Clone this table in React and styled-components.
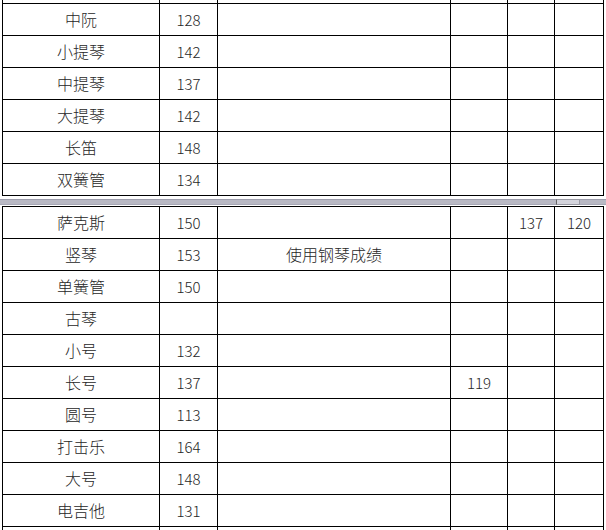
import styled, { createGlobalStyle } from 'styled-components';

const GlobalStyle = createGlobalStyle`
  html, body {
    margin: 0;
    padding: 0;
    background: #fff;
  }
  body {
    font-family: "Noto Sans CJK SC", "Noto Sans", sans-serif;
    color: #222;
  }
`;

const Page = styled.div`
  width: 606px;
  height: 530px;
  overflow: hidden;
  background: #fff;
`;

const Section = styled.div`
  display: flex;
  flex-direction: column;
  padding-left: 2px;
`;

const TopRule = styled.div`
  width: 602px;
  border-top: 1px solid #000;
`;

const Row = styled.div`
  display: grid;
  grid-template-columns: 158px 58px 233px 57px 47px 49px;
  height: ${(p) => (p.$cut ? '4px' : '32px')};
`;

const Cell = styled.div`
  box-sizing: border-box;
  display: flex;
  align-items: center;
  justify-content: center;
  border-right: 1px solid #000;
  border-bottom: 1px solid #000;
  font-size: ${(p) => (p.$num ? '15px' : '16px')};
  font-weight: 300;
  line-height: 1;
  color: #262626;
  padding-bottom: 1px;
  white-space: nowrap;
  overflow: hidden;

  &:first-child {
    border-left: 1px solid #000;
  }
`;

const PageBreak = styled.div`
  position: relative;
  height: 10px;
  padding: 3px 0 1px;
  box-sizing: border-box;
`;

const BreakBand = styled.div`
  height: 6px;
  background: #b9b9c4;
  border-top: 1px solid #9c9cab;
  border-bottom: 1px solid #a8a8b6;
  box-sizing: border-box;
`;

const BreakMarker = styled.div`
  position: absolute;
  left: 556px;
  top: 3px;
  width: 24px;
  height: 6px;
  box-sizing: border-box;
  border: 1px solid #9a9aa4;
  border-left: 1px solid #666;
  background: #d4d4dc;
`;

const topRows = [
  { name: '中阮', score: '128' },
  { name: '小提琴', score: '142' },
  { name: '中提琴', score: '137' },
  { name: '大提琴', score: '142' },
  { name: '长笛', score: '148' },
  { name: '双簧管', score: '134' },
];

const bottomRows = [
  { name: '萨克斯', score: '150', c5: '137', c6: '120' },
  { name: '竖琴', score: '153', note: '使用钢琴成绩' },
  { name: '单簧管', score: '150' },
  { name: '古琴', score: '' },
  { name: '小号', score: '132' },
  { name: '长号', score: '137', c4: '119' },
  { name: '圆号', score: '113' },
  { name: '打击乐', score: '164' },
  { name: '大号', score: '148' },
  { name: '电吉他', score: '131' },
  { name: '', score: '' },
];

const TableRow = ({ row }) => (
  <Row>
    <Cell>{row.name}</Cell>
    <Cell $num>{row.score}</Cell>
    <Cell>{row.note}</Cell>
    <Cell $num>{row.c4}</Cell>
    <Cell $num>{row.c5}</Cell>
    <Cell $num>{row.c6}</Cell>
  </Row>
);

const App = () => (
  <Page>
    <GlobalStyle />
    <Section>
      <Row $cut>
        <Cell />
        <Cell />
        <Cell />
        <Cell />
        <Cell />
        <Cell />
      </Row>
      {topRows.map((row) => (
        <TableRow key={row.name} row={row} />
      ))}
    </Section>
    <PageBreak>
      <BreakBand />
      <BreakMarker />
    </PageBreak>
    <Section>
      <TopRule />
      {bottomRows.map((row, i) => (
        <TableRow key={i} row={row} />
      ))}
    </Section>
  </Page>
);

export default App;
